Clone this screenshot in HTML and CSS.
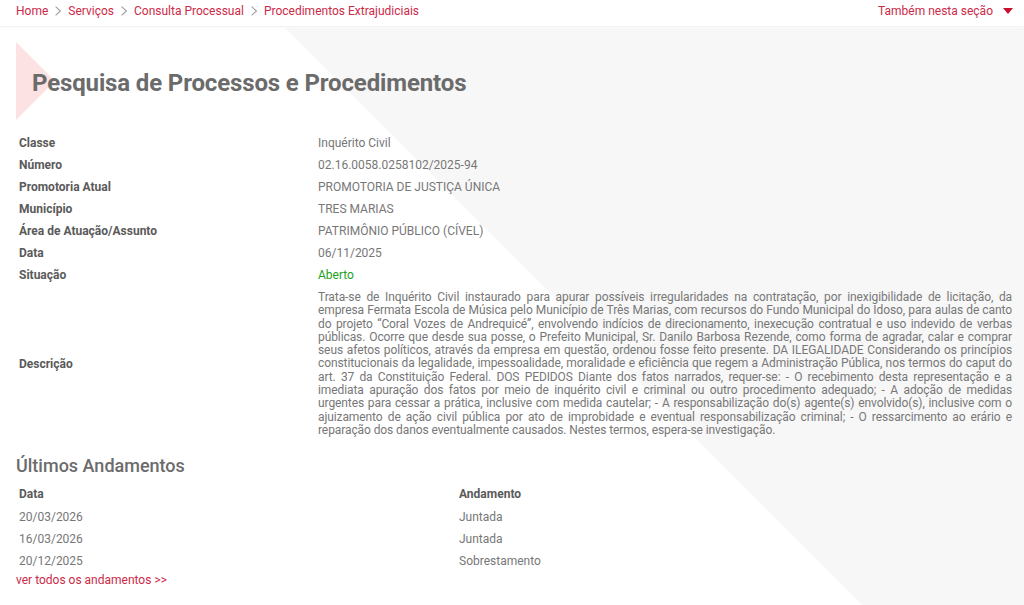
FILE: index.html
```html
<!DOCTYPE html>
<html lang="pt-BR">
<head>
<meta charset="utf-8">
<title>Pesquisa de Processos e Procedimentos</title>
<link rel="stylesheet" href="styles.css">
</head>
<body>
<header class="topbar">
  <nav class="crumbs">
    <a href="#">Home</a>
    <svg class="chev" viewBox="0 0 6 10" width="6" height="10"><path d="M0.6 0.6L5.4 5L0.6 9.4" fill="none" stroke="#a0a0a0" stroke-width="1.1"/></svg>
    <a href="#">Serviços</a>
    <svg class="chev" viewBox="0 0 6 10" width="6" height="10"><path d="M0.6 0.6L5.4 5L0.6 9.4" fill="none" stroke="#a0a0a0" stroke-width="1.1"/></svg>
    <a href="#">Consulta Processual</a>
    <svg class="chev" viewBox="0 0 6 10" width="6" height="10"><path d="M0.6 0.6L5.4 5L0.6 9.4" fill="none" stroke="#a0a0a0" stroke-width="1.1"/></svg>
    <a href="#">Procedimentos Extrajudiciais</a>
  </nav>
  <a class="section-menu" href="#">Também nesta seção <svg class="caret" viewBox="0 0 10 6" width="10" height="6"><path d="M0 0h10L5 6z" fill="#c8102e"/></svg></a>
</header>
<main class="content">
  <div class="page-head">
    <h1>Pesquisa de Processos e Procedimentos</h1>
  </div>
  <div class="details">
    <div class="lbl">Classe</div><div class="val">Inquérito Civil</div>
    <div class="lbl">Número</div><div class="val">02.16.0058.0258102/2025-94</div>
    <div class="lbl">Promotoria Atual</div><div class="val">PROMOTORIA DE JUSTIÇA ÚNICA</div>
    <div class="lbl">Município</div><div class="val">TRES MARIAS</div>
    <div class="lbl">Área de Atuação/Assunto</div><div class="val">PATRIMÔNIO PÚBLICO (CÍVEL)</div>
    <div class="lbl">Data</div><div class="val">06/11/2025</div>
    <div class="lbl">Situação</div><div class="val open">Aberto</div>
    <div class="lbl">Descrição</div>
    <div class="val desc">Trata-se de Inquérito Civil instaurado para apurar possíveis irregularidades na contratação, por inexigibilidade de licitação, da empresa Fermata Escola de Música pelo Município de Três Marias, com recursos do Fundo Municipal do Idoso, para aulas de canto do projeto “Coral Vozes de Andrequicé”, envolvendo indícios de direcionamento, inexecução contratual e uso indevido de verbas públicas. Ocorre que desde sua posse, o Prefeito Municipal, Sr. Danilo Barbosa Rezende, como forma de agradar, calar e comprar seus afetos políticos, através da empresa em questão, ordenou fosse feito presente. DA ILEGALIDADE Considerando os princípios constitucionais da legalidade, impessoalidade, moralidade e eficiência que regem a Administração Pública, nos termos do caput do art. 37 da Constituição Federal. DOS PEDIDOS Diante dos fatos narrados, requer-se: - O recebimento desta representação e a imediata apuração dos fatos por meio de inquérito civil e criminal ou outro procedimento adequado; - A adoção de medidas urgentes para cessar a prática, inclusive com medida cautelar; - A responsabilização do(s) agente(s) envolvido(s), inclusive com o ajuizamento de ação civil pública por ato de improbidade e eventual responsabilização criminal; - O ressarcimento ao erário e reparação dos danos eventualmente causados. Nestes termos, espera-se investigação.</div>
  </div>
  <h2 class="sub">Últimos Andamentos</h2>
  <div class="moves">
    <div class="th">Data</div><div class="th">Andamento</div>
    <div class="td">20/03/2026</div><div class="td">Juntada</div>
    <div class="td">16/03/2026</div><div class="td">Juntada</div>
    <div class="td">20/12/2025</div><div class="td">Sobrestamento</div>
  </div>
  <a class="all" href="#">ver todos os andamentos &gt;&gt;</a>
</main>
</body>
</html>
```
FILE: styles.css
```css
* { box-sizing: border-box; }
html, body { margin: 0; padding: 0; }
body {
  font-family: Roboto, "Liberation Sans", Arial, sans-serif;
  background: #fff;
  color: #777;
  width: 1024px;
  overflow: hidden;
}
a { text-decoration: none; }

.topbar {
  position: relative;
  z-index: 2;
  height: 26px;
  display: flex;
  justify-content: space-between;
  align-items: flex-start;
  padding: 4px 11px 0 16px;
  background: #fff;
  box-shadow: 0 1px 2px rgba(0, 0, 0, 0.07);
}
.crumbs {
  display: flex;
  align-items: center;
  gap: 7px;
  font-size: 12px;
  line-height: 14px;
}
.crumbs a, .section-menu { color: #cc2a48; }
.chev { display: block; }
.section-menu {
  display: flex;
  align-items: center;
  gap: 10px;
  font-size: 12px;
  line-height: 14px;
}
.caret { display: block; }

.content {
  position: relative;
  overflow: hidden;
  padding: 14px 9px 18px 16px;
  margin-top: 2px;
}
.content::before {
  content: "";
  position: absolute;
  top: 0;
  left: 285px;
  width: 1200px;
  height: 1200px;
  background: #f7f7f7;
  clip-path: polygon(0 0, 100% 0, 100% 100%);
  z-index: 0;
}
.content > * { position: relative; z-index: 1; }

.page-head {
  height: 79px;
  display: flex;
  align-items: center;
  padding-left: 16px;
}
.page-head::before {
  content: "";
  position: absolute;
  left: 0;
  top: 0;
  border-top: 39.5px solid transparent;
  border-bottom: 39.5px solid transparent;
  border-left: 39.5px solid #fde2e4;
  z-index: -1;
}
.page-head h1 {
  margin: 0;
  font-size: 24px;
  line-height: 28px;
  font-weight: 700;
  letter-spacing: -0.14px;
  color: #6b6b6b;
  padding-top: 2px;
}

.details {
  margin-top: 11px;
  display: grid;
  grid-template-columns: 299px 1fr;
  font-size: 12px;
}
.lbl, .val {
  padding: 0 3px;
  min-height: 22px;
  display: flex;
  align-items: center;
}
.lbl { font-weight: 700; color: #5a5a5a; }
.val { color: #777; }
.val.open { color: #22a022; }
.val.desc {
  display: block;
  text-align: justify;
  line-height: 13.3px;
  letter-spacing: -0.09px;
  padding-top: 5px;
  padding-bottom: 4px;
}

.sub {
  margin: 13px 0 0;
  font-size: 18px;
  line-height: 24px;
  font-weight: 500;
  color: #6b6b6b;
}
.moves {
  margin-top: 4px;
  display: grid;
  grid-template-columns: 440px 1fr;
  font-size: 12px;
}
.th, .td {
  padding: 0 3px;
  height: 22px;
  display: flex;
  align-items: center;
}
.th { font-weight: 700; color: #5a5a5a; height: 24px; }
.td { color: #777; }
.all {
  display: block;
  font-size: 12px;
  line-height: 16px;
  margin-top: 0;
  color: #cc2a48;
}
```
